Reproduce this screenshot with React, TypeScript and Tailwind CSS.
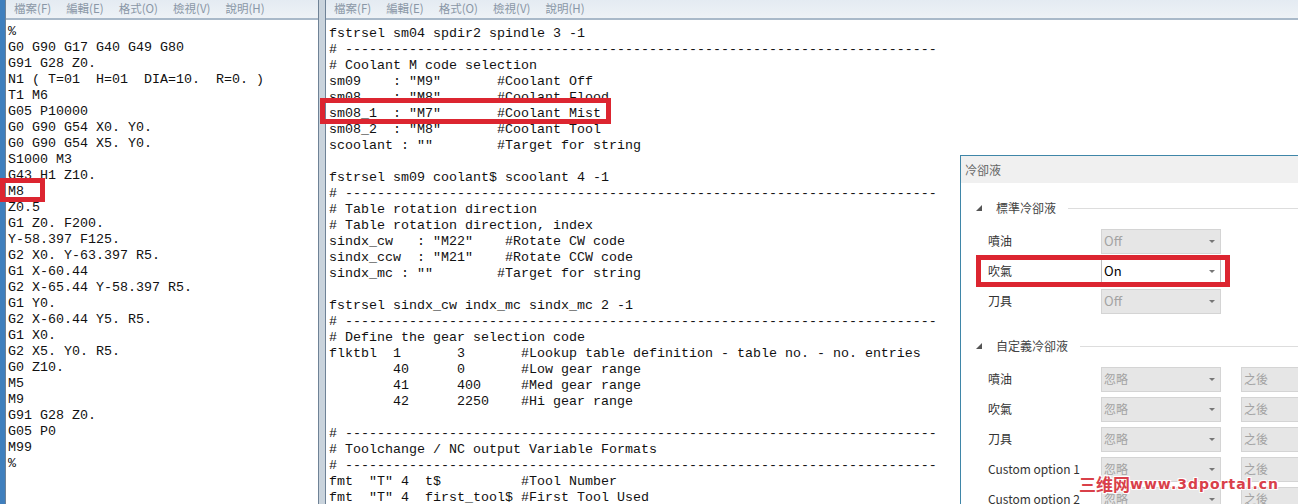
const mono = "font-['Liberation_Mono','Noto_Sans_CJK_TC',monospace]";
const sans = "font-['Noto_Sans_CJK_TC','Noto_Sans',sans-serif]";

const leftLines = `%
G0 G90 G17 G40 G49 G80
G91 G28 Z0.
N1 ( T=01  H=01  DIA=10.  R=0. )
T1 M6
G05 P10000
G0 G90 G54 X0. Y0.
G0 G90 G54 X5. Y0.
S1000 M3
G43 H1 Z10.
M8
Z0.5
G1 Z0. F200.
Y-58.397 F125.
G2 X0. Y-63.397 R5.
G1 X-60.44
G2 X-65.44 Y-58.397 R5.
G1 Y0.
G2 X-60.44 Y5. R5.
G1 X0.
G2 X5. Y0. R5.
G0 Z10.
M5
M9
G91 G28 Z0.
G05 P0
M99
%`;

const dash = "# --------------------------------------------------------------------------";

const rightLines = `fstrsel sm04 spdir2 spindle 3 -1
${dash}
# Coolant M code selection
sm09    : "M9"       #Coolant Off
sm08    : "M8"       #Coolant Flood
sm08_1  : "M7"       #Coolant Mist
sm08_2  : "M8"       #Coolant Tool
scoolant : ""        #Target for string

fstrsel sm09 coolant$ scoolant 4 -1
${dash}
# Table rotation direction
# Table rotation direction, index
sindx_cw   : "M22"    #Rotate CW code
sindx_ccw  : "M21"    #Rotate CCW code
sindx_mc : ""        #Target for string

fstrsel sindx_cw indx_mc sindx_mc 2 -1
${dash}
# Define the gear selection code
flktbl  1       3       #Lookup table definition - table no. - no. entries
        40      0       #Low gear range
        41      400     #Med gear range
        42      2250    #Hi gear range

${dash}
# Toolchange / NC output Variable Formats
${dash}
fmt  "T" 4  t$          #Tool Number
fmt  "T" 4  first_tool$ #First Tool Used`;

function MenuBar() {
  return (
    <div className={`flex h-[20px] shrink-0 items-center gap-[15px] border-b-2 border-[#a9b9c9] bg-gradient-to-b from-[#e4ebf2] to-[#eef2f6] pb-[1px] pl-[8px] text-[11.5px] text-[#8a97a6] ${sans}`}>
      {["檔案(F)", "編輯(E)", "格式(O)", "檢視(V)", "說明(H)"].map((m) => (
        <span key={m}>{m}</span>
      ))}
    </div>
  );
}

function Select({ value, enabled }: { value: string; enabled?: boolean }) {
  return (
    <div
      className={`flex h-[25px] w-[120px] shrink-0 items-center justify-between pr-[3px] pl-[2px] ${
        value === "忽略" || value === "之後" ? "text-[12px]" : "text-[13px]"
      } ${enabled ? "border-x border-[#bdbdbd] bg-white text-black" : "border border-[#d4d4d4] bg-[#e6e6e6] text-[#a3a3a3]"}`}
    >
      <span>{value}</span>
      <span className="mr-[2px] h-0 w-0 border-x-[3px] border-t-[3px] border-x-transparent border-t-[#777777]" />
    </div>
  );
}

function Row({ label, value, enabled, second }: { label: string; value: string; enabled?: boolean; second?: boolean }) {
  return (
    <div className="flex h-[30px] items-center pl-[27px]">
      <span className="w-[113px] shrink-0 text-[12px] text-[#333333]">{label}</span>
      <Select value={value} enabled={enabled} />
      {second && (
        <div className="ml-[20px]">
          <Select value="之後" />
        </div>
      )}
    </div>
  );
}

function Section({ title }: { title: string }) {
  return (
    <div className="flex h-[22px] items-center pl-[15px]">
      <span className="h-0 w-0 border-b-[6px] border-l-[6px] border-b-[#555555] border-l-transparent" />
      <span className="ml-[14px] text-[12px] text-[#444444]">{title}</span>
      <span className="ml-[12px] h-px flex-1 bg-[#dddddd]" />
    </div>
  );
}

export default function App() {
  return (
    <div className="relative flex h-[504px] w-[1298px] overflow-hidden bg-[#c9d3dc]">
      <div className="w-[5px] shrink-0 bg-[#3f7fbd]" />
      <div className="flex h-full w-[314px] flex-col border-x border-[#6f8296] bg-white">
        <MenuBar />
        <pre className={`m-0 pt-[4px] pl-[2px] text-[13.33px] leading-[16px] text-[#111111] ${mono}`}>{leftLines}</pre>
      </div>
      <div className="ml-[6px] flex h-full flex-1 flex-col border-l border-[#6f8296] bg-white">
        <MenuBar />
        <pre className={`m-0 pt-[6px] pl-[3px] text-[13.33px] leading-[16px] text-[#111111] ${mono}`}>{rightLines}</pre>
      </div>

      {/* Dialog */}
      <div className={`absolute top-[155px] left-[960px] h-[349px] w-[338px] border-t border-l border-[#3f86a8] bg-white ${sans}`}>
        <div className="flex h-[27px] items-center bg-[#f0f0f0] pl-[4px] text-[12px] text-[#666666]">冷卻液</div>
        <div className="mt-[14px]">
          <Section title="標準冷卻液" />
        </div>
        <div className="mt-[7px]">
          <Row label="噴油" value="Off" />
          <Row label="吹氣" value="On" enabled />
          <Row label="刀具" value="Off" />
        </div>
        <div className="mt-[19px]">
          <Section title="自定義冷卻液" />
        </div>
        <div className="mt-[7px]">
          <Row label="噴油" value="忽略" second />
          <Row label="吹氣" value="忽略" second />
          <Row label="刀具" value="忽略" second />
          <Row label="Custom option 1" value="忽略" second />
          <Row label="Custom option 2" value="忽略" second />
        </div>
      </div>

      {/* Red highlights */}
      <div className="absolute top-[178px] left-0 h-[24px] w-[45px] border-[5px] border-[#dc2530]" />
      <div className="absolute top-[98px] left-[320px] h-[26px] w-[291px] border-[5px] border-[#dc2530]" />
      <div className="absolute top-[255px] left-[976px] h-[32px] w-[254px] border-[5px] border-[#dc2530]" />

      {/* Watermark */}
      <div className="absolute top-[475px] left-[1079px] flex items-center whitespace-pre font-bold text-[#d9404a] [text-shadow:0_0_1px_#fff,1px_1px_0_#fff,-1px_-1px_0_#fff,1px_-1px_0_#fff,-1px_1px_0_#fff]">
        <span className={`text-[17px] leading-[18px] ${sans}`}>三维网</span>
        <span className="font-['DejaVu_Sans',sans-serif] text-[14px] leading-[18px] tracking-[1px]">www.3dportal.cn</span>
      </div>
    </div>
  );
}
